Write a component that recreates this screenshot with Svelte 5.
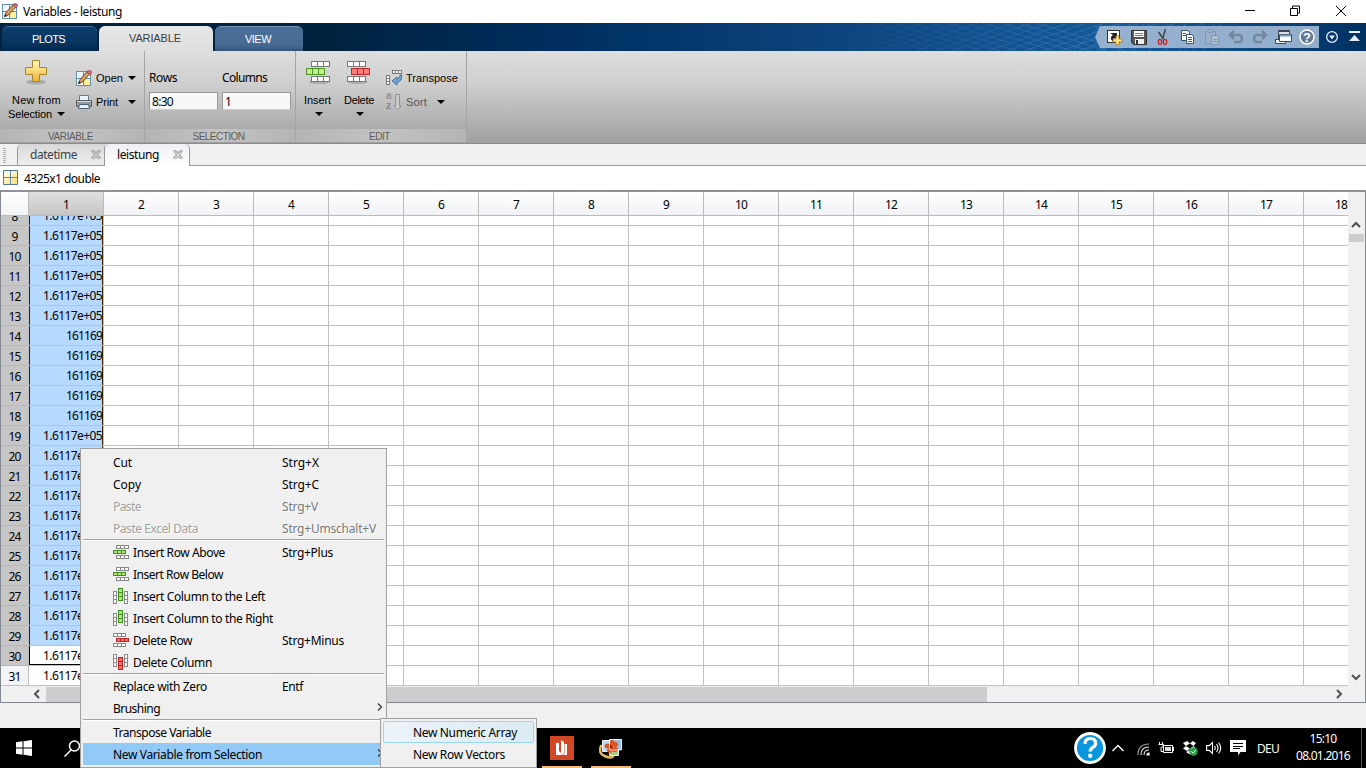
<script>
  const columns = Array.from({ length: 18 }, (_, i) => i + 1);
  const rows = Array.from({ length: 24 }, (_, i) => {
    const n = i + 8;
    return { n, value: n >= 14 && n <= 18 ? '161169' : '1.6117e+05', w: n >= 14 && n <= 18 ? 36 : 59 };
  });

  const menu = [
    { label: 'Cut', w: 19, key: 'Strg+X', kw: 37 },
    { label: 'Copy', w: 28, key: 'Strg+C', kw: 37 },
    { label: 'Paste', w: 28, key: 'Strg+V', kw: 36, off: true },
    { label: 'Paste Excel Data', w: 85, key: 'Strg+Umschalt+V', kw: 94, off: true },
    { sep: true },
    { label: 'Insert Row Above', w: 92, key: 'Strg+Plus', kw: 51, icon: 'row', color: 'green' },
    { label: 'Insert Row Below', w: 90, icon: 'row', color: 'green' },
    { label: 'Insert Column to the Left', w: 132, icon: 'col', color: 'green' },
    { label: 'Insert Column to the Right', w: 140, icon: 'col', color: 'green' },
    { label: 'Delete Row', w: 59, key: 'Strg+Minus', kw: 62, icon: 'row', color: 'red' },
    { label: 'Delete Column', w: 79, icon: 'col', color: 'red' },
    { sep: true },
    { label: 'Replace with Zero', w: 94, key: 'Entf', kw: 21 },
    { label: 'Brushing', w: 47, sub: true },
    { sep: true },
    { label: 'Transpose Variable', w: 98 },
    { label: 'New Variable from Selection', w: 149, sub: true, active: true }
  ];

  // Tracks the text so that the label takes up the given width.
  function fit(node, width) {
    const natural = node.getBoundingClientRect().width;
    node.style.letterSpacing = (width - natural) / node.textContent.length + 'px';
  }
</script>

{#snippet cells(x, y, w, h, n, vertical, stroke, fill)}
  {#each Array(n) as _, i}
    <rect x={x + (vertical ? 0 : i * (w - 1))} y={y + (vertical ? i * (h - 1) : 0)} width={w - 1} height={h - 1} {stroke} {fill} />
  {/each}
{/snippet}

{#snippet caret()}
  <svg class="caret" width="8" height="4"><path d="M0 0h8L4 4z" fill="#000" /></svg>
{/snippet}

{#snippet cross(inner)}
  <svg width="10" height="9"><path d="M1 0l8 9M9 0L1 9" stroke="#a2a2a2" stroke-width="3" /><path d="M1.500 1l7 7.500M8.500 1L1.500 8.500" stroke={inner} stroke-width=".9" /></svg>
{/snippet}

{#snippet pencil()}
  <svg width="16" height="16" viewBox="0 0 16 16">
    <rect x=".5" y="1.500" width="14" height="14" fill="#fff" stroke="#6291b0" />
    <path d="M8 9h6v6H8z" fill="#fff09a" /><path d="M1 2h6v6H1z" fill="#eef6fc" />
    <path d="M7.500 2v13M1 8.500h13" stroke="#6291b0" />
    <path d="M2.500 13.500l1.500-4L11.500 1l3 2.500-8 8.500z" fill="#d49a5c" stroke="#50311d" stroke-width=".8" />
    <path d="M11 2l2-2 3 2-2 3z" fill="#d9697a" stroke="#8d3545" stroke-width=".6" />
    <path d="M2 14l1-3 2 2z" fill="#222" />
  </svg>
{/snippet}

<div class="window">
  <div class="titlebar">
    {@render pencil()}
    <span class="ui" use:fit={99}>Variables - leistung</span>
    <svg class="winbtns" width="106" height="20" fill="none" stroke="#000">
      <path d="M0 9.500h10M45.500 7.500h7v7h-7zM47.500 7v-2h7v7h-2M91 5l10 10M101 5L91 15" />
    </svg>
  </div>

  <div class="tabs">
    <div class="tab plots"><span use:fit={33}>PLOTS</span></div>
    <div class="tab current"><span use:fit={52}>VARIABLE</span></div>
    <div class="tab view"><span use:fit={26}>VIEW</span></div>
    <svg class="mesh" width="406" height="28" fill="none" stroke="#8fb4dc" stroke-width=".8">
      <defs>
        <linearGradient id="fade"><stop offset="0" stop-color="#fff" stop-opacity="0" /><stop offset=".6" stop-color="#fff" /></linearGradient>
        <mask id="m"><rect width="406" height="28" fill="url(#fade)" /></mask>
      </defs>
      <g mask="url(#m)" opacity=".28">
        {#each Array(17) as _, i}
          <path d="M{i * 18 - 80} 0l90 28M{i * 18 - 20} 28l80 -28" />
        {/each}
        {#each Array(9) as _, i}
          <path d="M{245 + i * 15} 28l{30 - i} -28M{265 + i * 18} 0l22 28" />
        {/each}
      </g>
    </svg>
    <div class="quick">
      <svg width="224" height="22" viewBox="0 0 224 22">
        <path d="M0 11L5 0H224V22H5z" fill="#a3bad5" fill-opacity=".9" />
        <rect x="12.500" y="4.500" width="12" height="12" fill="#fff" stroke="#333" />
        <path d="M15 7h7v7l-2-2c-2 1-2 1-1 4-4-2-4-5-1-7z" fill="#222" />
        <path d="M21 10h3v3h3v3h-3v3h-3v-3h-3v-3h3z" fill="#ffe680" stroke="#a97c1d" stroke-width=".8" />
        <path d="M36.500 4.500h15v14h-13l-2-2z" fill="#555" stroke="#333" />
        <rect x="39" y="5" width="10" height="6" fill="#fff" /><path d="M40 7.500h8M40 9.500h8" stroke="#777" />
        <rect x="40" y="13" width="9" height="5" fill="#eee" /><rect x="41" y="14" width="2" height="4" fill="#333" />
        <path d="M70.500 3l-3 10M63.500 6l5 7" stroke="#444" stroke-width="1.500" />
        <g fill="none" stroke="#d01d22" stroke-width="1.300"><ellipse cx="65" cy="15.800" rx="1.700" ry="2.500" /><ellipse cx="70" cy="15.800" rx="1.700" ry="2.500" /></g>
        <g stroke="#33536f" fill="#fff"><path d="M86.500 4.500h6l2 2v8h-8z" /><path d="M91.500 8.500h5l2 2v7h-7z" /><path d="M88 7.500h3M88 9.500h3M93 11.500h4M93 13.500h4M93 15.500h4" /></g>
        <g opacity=".45" stroke="#68798f" fill="#a6b4c5"><path d="M110.500 5.500h10v12h-10z" /><path d="M113 3.500h5v3h-5z" /><path d="M116.500 9.500h5l2 2v7h-7z" fill="#cbd5e2" /><path d="M118 13.500h4M118 15.500h4" /></g>
        <g fill="none" stroke="#73879f" stroke-width="2.500"><path d="M139 5l-4 4 4 4M136 9h8q3 0 3 3.500t-3 3.500h-5" /><path d="M167 5l4 4-4 4M170 9h-8q-3 0-3 3.500t3 3.500h5" /></g>
        <g stroke="#3f4952"><path d="M183.500 4.500h11v9h-11z" fill="#ddd" /><path d="M183 5h12" stroke-width="2" /><path d="M180.500 13.500h10v4h-10z" fill="#eee" /><path d="M184.500 8.500h12v7h-12z" fill="#fff" /><path d="M185 9.500h11" stroke="#6a9cca" stroke-width="2" /></g>
        <circle cx="212" cy="11" r="7" fill="#607b98" stroke="#fff" stroke-width="1.500" />
        <text x="212" y="15.500" text-anchor="middle" font-size="13" font-weight="bold" fill="#fff">?</text>
      </svg>
      <svg width="47" height="22" viewBox="0 0 47 22" fill="#e7eef7">
        <circle cx="13" cy="11" r="5.300" fill="none" stroke="#e7eef7" stroke-width="1.300" /><path d="M10 9.500h6L13 13.500z" />
        <path d="M30 5h11v2H30zM30 15h11L35.500 9z" />
      </svg>
    </div>
  </div>

  <div class="ribbon">
    <section class="s1">
      <div class="tools">
        <div class="big new">
          <svg width="24" height="26"><defs><linearGradient id="gold" x2="0" y2="1"><stop offset="0" stop-color="#fff8bc" /><stop offset="1" stop-color="#eeb52c" /></linearGradient></defs><ellipse cx="12" cy="22" rx="10" ry="2.500" fill="#888" opacity=".5" /><path d="M8.500 .5h7v7h7v7h-7v7h-7v-7h-7v-7h7z" fill="url(#gold)" stroke="#a7842d" /></svg>
          <span class="l1" use:fit={49}>New from</span>
          <span class="l2"><span use:fit={44}>Selection</span>{@render caret()}</span>
        </div>
        <div class="stack">
          <div class="tool">{@render pencil()}<span use:fit={27}>Open</span>{@render caret()}</div>
          <div class="tool"><svg width="16" height="16"><path d="M3.500 1.500h9v6h-9z" fill="#e8f3fb" stroke="#65798a" /><path d="M.5 6.500h15v6H.5z" fill="#93999f" stroke="#5b6065" /><path d="M1 7.500h14" stroke="#d5d8da" /><path d="M3.500 10.500h9l1 4h-11z" fill="#e3f1fa" stroke="#4e6577" /></svg><span use:fit={22}>Print</span>{@render caret()}</div>
        </div>
      </div>
      <footer><span use:fit={45}>VARIABLE</span></footer>
    </section>
    <section class="s2">
      <div class="tools fields">
        <div class="field"><span class="ui" use:fit={28}>Rows</span><div class="input ui"><span use:fit={21}>8:30</span></div></div>
        <div class="field"><span class="ui" use:fit={45}>Columns</span><div class="input ui"><span use:fit={6}>1</span></div></div>
      </div>
      <footer><span use:fit={52}>SELECTION</span></footer>
    </section>
    <section class="s3">
      <div class="tools">
        <div class="big ins">
          <svg width="26" height="24"><ellipse cx="14" cy="21" rx="10" ry="2" fill="#777" opacity=".4" />{@render cells(6.5, 0.5, 7, 6, 3, false, '#777', '#fff')}{@render cells(1.5, 7.5, 7, 7, 3, false, '#4b9525', '#c3ee8a')}{@render cells(6.5, 15.5, 7, 6, 3, false, '#777', '#fff')}</svg>
          <span class="l1" use:fit={27}>Insert</span><span class="l2">{@render caret()}</span>
        </div>
        <div class="big del">
          <svg width="26" height="24"><ellipse cx="12" cy="21" rx="10" ry="2" fill="#777" opacity=".4" />{@render cells(1.5, 0.5, 7, 6, 3, false, '#777', '#fff')}{@render cells(5.5, 7.5, 7, 7, 3, false, '#bb282b', '#fa7d78')}{@render cells(1.5, 15.5, 7, 6, 3, false, '#777', '#fff')}</svg>
          <span class="l1" use:fit={30}>Delete</span><span class="l2">{@render caret()}</span>
        </div>
        <div class="stack edit">
          <div class="tool"><svg width="16" height="16">{@render cells(6.5, 0.5, 4, 4, 3, false, '#777', '#fff')}{@render cells(0.5, 5.5, 4, 4, 3, true, '#777', '#fff')}<path d="M14 5h2q0 7-5 7v3l-5-4 5-4v2q3 0 3-4z" fill="#6ca8d5" stroke="#2c638f" stroke-width=".8" /></svg><span use:fit={52}>Transpose</span></div>
          <div class="tool sort"><svg width="16" height="18"><text x="0" y="6" font-size="10" font-weight="bold" fill="#929292">a</text><text x="0" y="16" font-size="10" font-weight="bold" fill="#858585">z</text><path d="M9.500 1.500h4v11h2L11.500 16.500l-4-4h2z" fill="#c9c9c9" stroke="#939393" /></svg><span use:fit={21}>Sort</span>{@render caret()}</div>
        </div>
      </div>
      <footer><span use:fit={21}>EDIT</span></footer>
    </section>
  </div>

  <div class="docs">
    <svg class="grip" width="4" height="16" fill="#b0b0b0">{#each Array(8) as _, i}<path d="M0 {i * 2}h3v1H0z" />{/each}</svg>
    <div class="doc ui"><span use:fit={47}>datetime</span>{@render cross('#e8e8e8')}</div>
    <div class="doc open ui"><span use:fit={42}>leistung</span>{@render cross('#fff')}</div>
  </div>

  <div class="info ui">
    <svg width="16" height="16"><defs><linearGradient id="y" x2="1" y2="1"><stop offset="0" stop-color="#fff" /><stop offset="1" stop-color="#fbe068" /></linearGradient></defs><path d="M.5 .5h14v14H.5z" fill="url(#y)" stroke="#557890" /><path d="M7.500 1v13M1 7.500h13" stroke="#6589a0" /></svg>
    <span use:fit={76}>4325x1 double</span>
  </div>

  <div class="grid ui">
    <div class="head">
      <div class="corner"></div>
      {#each columns as c}<div class="hcell" class:sel={c === 1}><span use:fit={c < 10 ? 6 : 12}>{c}</span></div>{/each}
    </div>
    <div class="middle">
      <div class="body">
        <div class="rows">
          {#each rows as r}
            <div class="row">
              <div class="rh" class:sel={r.n < 31}><span use:fit={r.n < 10 ? 6 : 12}>{r.n}</span></div>
              {#each columns as c}
                <div class="cell" class:sel={c === 1 && r.n < 30} class:focus={c === 1 && r.n === 30}>{#if c === 1}<span use:fit={r.w}>{r.value}</span>{/if}</div>
              {/each}
            </div>
          {/each}
        </div>
      </div>
      <div class="vscroll">
        <svg width="10" height="7"><path d="M1 6l4-4 4 4" fill="none" stroke="#505050" stroke-width="2" /></svg>
        <div class="vthumb"></div>
        <svg class="down" width="10" height="7"><path d="M1 1l4 4 4-4" fill="none" stroke="#505050" stroke-width="2" /></svg>
      </div>
    </div>
    <div class="hscroll">
      <svg width="7" height="10"><path d="M6 1L2 5l4 4" fill="none" stroke="#505050" stroke-width="2" /></svg>
      <div class="hthumb"></div>
      <svg class="right" width="7" height="10"><path d="M1 1l4 4-4 4" fill="none" stroke="#505050" stroke-width="2" /></svg>
    </div>
  </div>
  <div class="status"></div>

  <div class="taskbar">
    <svg class="t-win" width="16" height="16" fill="#fff"><path d="M0 2.200L6.500 1.300V7.500H0zM7.500 1.200L16 0V7.500H7.500zM0 8.500H6.500V14.700L0 13.800zM7.500 8.500H16V16L7.500 14.800z" /></svg>
    <svg class="t-find" width="17" height="17" fill="none" stroke="#fff" stroke-width="1.500"><circle cx="10.500" cy="6" r="5" /><path d="M7 10L.5 16.500" /></svg>
    <div class="app a1">
      <svg width="24" height="24"><path d="M0 0h24v24H0z" fill="#d24726" /><path d="M6 7h3v8l2 2V4l3 2v11l-2 2H6zM14.500 8H17v11h-4l1.500-2z" fill="#fff" /></svg>
    </div>
    <div class="app a2">
      <svg width="24" height="24"><path d="M2.500 9q-4 8 3 11t9 0" fill="none" stroke="#e7b65a" stroke-width="2.500" /><path d="M3.500 4.500h10v11h-10z" fill="#b8dcf2" stroke="#eee" /><path d="M10.500 3.500h12v10h-12z" fill="#8fc2e3" stroke="#fff" /><path d="M10.500 13.500h9v6h-9z" fill="#a7ce85" stroke="#eee" /><g fill="#e4531c"><ellipse cx="9" cy="10" rx="3.500" ry="2.500" /><ellipse cx="13" cy="7" rx="2.500" ry="3" /><ellipse cx="16.500" cy="8.500" rx="2.500" ry="2.500" /><ellipse cx="15.500" cy="13.500" rx="3.500" ry="2.500" /><ellipse cx="10.500" cy="14.500" rx="2.500" ry="2.500" /></g><path d="M11 9l3 1-1 3-2-1z" fill="#a12a12" /><path d="M10.500 4v10h12" stroke="#fff" fill="none" opacity=".7" /></svg>
    </div>
    <svg class="t-help" width="32" height="32"><circle cx="16" cy="16" r="14.500" fill="#0a96dc" stroke="#fff" stroke-width="2.800" /><path d="M11 12q0-5.500 5.300-5.500t5.300 4.700q0 2.600-2.700 4.200t-2.700 4" fill="none" stroke="#fff" stroke-width="3.200" /><circle cx="16.200" cy="23.800" r="2.200" fill="#fff" /></svg>
    <svg class="t-up" width="12" height="8"><path d="M.5 7L6 1.500 11.500 7" fill="none" stroke="#fff" stroke-width="1.400" /></svg>
    <svg class="t-wifi" width="13" height="13" fill="none" stroke="#999" stroke-width="1.200"><path d="M1 12Q1 1 12 1" /><path d="M4 12Q4 4 12 4M7 12Q7 7 12 7" stroke="#ddd" /><path d="M10 12q0-2 2-2v2z" fill="#fff" stroke="#fff" /></svg>
    <svg class="t-bat" width="16" height="12" fill="none" stroke="#fff"><path d="M5.500 3.500h9v7h-9zM15.500 5v4M1.500 0v2M4.500 0v2M.5 2.500h5q0 3-2.500 3v4h2" /><path d="M7 5h6v4H7z" fill="#ddd" stroke="none" /></svg>
    <svg class="t-drop" width="15" height="15" fill="#fff"><path d="M0 2l4-2 3 2.500L3 5zM13 2L9.500 0 7 2.500 10.500 5zM0 7.500L3 5l4 2.500L4 10zM13 7.500L10.500 5 7 7.500 10 10zM3 11l4-2 3 2-3 2.500z" /><circle cx="10.500" cy="10.500" r="4.200" fill="#25a747" /><path d="M8.500 10.500l1.500 1.500 3-3" fill="none" stroke="#fff" /></svg>
    <svg class="t-vol" width="17" height="14" fill="none" stroke="#fff" stroke-width="1.100"><path d="M.6 4.600h2.500L6.500 1.500v11L3.100 9.400H.6zM8.500 5q1.500 2 0 4M10.500 3q3 4 0 8M12.500 1.500q4.500 5.500 0 11" /></svg>
    <svg class="t-note" width="16" height="16"><path d="M0 0h16v12h-5.500L8 15.500V12H0z" fill="#fff" /><path d="M3 3.500h10M3 6.500h10M3 8.500h7" stroke="#000" /></svg>
    <span class="lang ui"><span use:fit={22}>DEU</span></span>
    <div class="clock ui"><span use:fit={27}>15:10</span><span use:fit={54}>08.01.2016</span></div>
    <div class="desk"></div>
  </div>

  <div class="menu ui">
    {#each menu as item}
      {#if item.sep}
        <hr />
      {:else}
        <div class="item" class:off={item.off} class:active={item.active}>
          {#if item.icon}
            {@const s = item.color === 'green' ? '#3f8c1f' : '#bb2327'}
            {@const f = item.color === 'green' ? '#b4e680' : '#f5716c'}
            {@const o = item.color === 'green'}
            <svg width="17" height="17">
              {#if item.icon === 'row'}
                {@render cells(o ? 3.5 : 0.5, 1.5, 5, 4, 3, false, '#888', '#fff')}
                {@render cells(o ? 0.5 : 3.5, 6.5, 5, 4, 3, false, s, f)}
                {@render cells(o ? 3.5 : 0.5, 11.5, 5, 4, 3, false, '#888', '#fff')}
              {:else}
                {@render cells(0.5, o ? 3.5 : 0.5, 4, 5, 3, true, '#888', '#fff')}
                {@render cells(5.5, o ? 0.5 : 3.5, 5, 5, 3, true, s, f)}
                {@render cells(11.5, o ? 3.5 : 0.5, 4, 5, 3, true, '#888', '#fff')}
              {/if}
            </svg>
          {/if}
          <span class="label"><span use:fit={item.w}>{item.label}</span></span>
          {#if item.key}<span class="key"><span use:fit={item.kw}>{item.key}</span></span>{/if}
          {#if item.sub}<svg class="arrow" width="6" height="8"><path d="M1 .5L4.500 4 1 7.500" fill="none" stroke="#333" stroke-width="1.200" /></svg>{/if}
        </div>
      {/if}
    {/each}
  </div>
  <div class="submenu ui">
    <div class="sitem hot"><span use:fit={104}>New Numeric Array</span></div>
    <div class="sitem"><span use:fit={92}>New Row Vectors</span></div>
  </div>
</div>

<style>
  :global(body) { overflow: hidden; }
  .window { position: relative; width: 1366px; height: 768px; display: flex; flex-direction: column; overflow: hidden; background: #fff; color: #000; font: 11px "Liberation Sans", Arial, sans-serif; white-space: nowrap; }
  .window * { box-sizing: border-box; }
  svg { display: block; flex: none; }
  .ui { font-family: "Noto Sans", "Open Sans", sans-serif; font-size: 12px; }

  .titlebar { height: 23px; display: flex; align-items: center; padding: 0 15px 1px 2px; gap: 5px; }
  .winbtns { margin-left: auto; }

  .tabs { height: 28px; display: flex; align-items: flex-end; gap: 2px; padding-left: 2px; background: linear-gradient(90deg, #00233f 0, #00233f 24%, #002d5d 40%, #003468 46%, #0c4078 58%, #11508f 72%, #145a9a 82%, #0b4681 92%, #003060 100%); }
  .tab { height: 25px; display: flex; align-items: center; justify-content: center; border-radius: 6px 6px 0 0; font-size: 11px; color: #fff; padding: 0 2px 1px 0; }
  .plots { width: 95px; background: linear-gradient(#0d3e6e, #08345f 70%, #002850); border-top: 1px solid #487098; }
  .current { width: 114px; background: linear-gradient(#e8e8e8, #dedede); color: #3c3c3c; }
  .view { width: 88px; background: linear-gradient(#4b6f98, #466a93 75%, #315578); border-top: 1px solid #7894b3; }
  .mesh { margin-left: auto; margin-right: -141px; }
  .quick { display: flex; width: 271px; align-self: center; flex: none; }

  .ribbon { height: 93px; display: flex; background: linear-gradient(#dedede, #cfcfcf 35%, #a0a0a0); border-bottom: 1px solid #8c8c8c; }
  section { display: flex; flex-direction: column; border-right: 1px solid #a5a5a5; height: 91px; }
  .s1 { width: 145px; }
  .s2 { width: 151px; }
  .s3 { width: 171px; }
  .tools { height: 78px; display: flex; }
  footer { height: 13px; background: linear-gradient(90deg, #b4b4b4, #c3c3c3 50%, #b4b4b4); display: flex; align-items: center; justify-content: center; font-size: 10px; color: #5e5e5e; padding: 1px 3px 0 0; }
  .big { display: flex; flex-direction: column; align-items: center; }
  .big > svg { height: 26px; }
  .l1 { height: 14px; line-height: 14px; }
  .l2 { height: 14px; display: flex; align-items: center; gap: 5px; }
  .new { width: 73px; padding-top: 9px; }
  .new > svg { margin-right: 2px; }
  .new .l1, .ins .l1, .del .l1 { margin-top: 7px; }
  .ins { width: 43px; padding-top: 9px; }
  .del { width: 40px; padding-top: 9px; }
  .ins > svg, .del > svg { margin-top: 1px; height: 25px; }
  .ins .l2, .del .l2 { padding-left: 2px; }
  .stack { padding: 15px 0 0 3px; }
  .tool { height: 24px; display: flex; align-items: center; gap: 4px; }
  .stack:not(.edit) .caret { margin-left: auto; }
  .stack:not(.edit) { width: 63px; }
  .edit { padding-left: 7px; }
  .edit .caret { margin-left: 6px; }
  .sort { color: #555; }
  .fields { padding: 15px 0 0 4px; gap: 4px; }
  .field { width: 69px; display: flex; flex-direction: column; }
  .field > span { height: 26px; line-height: 23px; align-self: flex-start; }
  .input { height: 18px; display: flex; align-items: center; background: #f8f8f8; border: 1px solid #9a9a9a; border-bottom-color: #ccc; padding-left: 2px; }

  .docs { height: 22px; display: flex; background: #f0f0f0; border-bottom: 1px solid #999; }
  .grip { margin: 4px 11px 0 3px; }
  .doc { width: 88px; height: 21px; display: flex; align-items: center; justify-content: space-between; padding: 0 4px 0 12px; color: #444; background: linear-gradient(#d8d8d8, #eee); border: 1px solid #999; border-width: 0 0 0 1px; border-radius: 5px 0 0; margin-left: -1px; }
  .open { width: 86px; height: 22px; color: #000; background: linear-gradient(#f0f0f5, #fff); border-width: 0 1px; border-radius: 5px 5px 0 0; margin-left: -1px; padding: 0 6px 1px 12px; }

  .info { height: 24px; display: flex; align-items: center; gap: 5px; padding: 0 0 0 3px; }

  .grid { height: 513px; display: flex; flex-direction: column; border: 1px solid #828790; border-top: 2px solid #909298; background: #f0f0f0; }
  .head { height: 24px; width: 1347px; display: flex; overflow: hidden; flex: none; }
  .corner { width: 28px; flex: none; border: 1px solid #bbb; border-width: 0 1px 1px 0; background: linear-gradient(#fff, #f2f3f6); }
  .hcell { width: 75px; flex: none; display: flex; align-items: center; justify-content: center; border: 1px solid #bbb; border-width: 0 1px 1px 0; background: linear-gradient(#fff, #f1f2f5); padding-top: 1px; }
  .hcell.sel { background: linear-gradient(#dfdfdf, #c6c6c6); }
  .middle { height: 470px; display: flex; flex: none; }
  .body { width: 1347px; overflow: hidden; background: #fff; }
  .rows { margin-top: -10px; }
  .row { display: flex; height: 20px; }
  .rh { width: 28px; flex: none; display: flex; align-items: center; justify-content: center; background: #f3f4f7; border: 1px solid #c0c0c0; border-width: 0 1px 1px 0; padding-top: 1px; }
  .rh.sel { background: #c6c6c6; border-bottom-color: #b8b8b8; }
  .cell { width: 75px; flex: none; display: flex; align-items: center; justify-content: flex-end; border: 1px solid #c0c0c0; border-width: 0 1px 1px 0; padding-right: 1px; }
  .cell.sel { background: #b5d9ff; box-shadow: inset 1px 0 #402000, inset -1px 0 #402000; }
  .cell.focus { box-shadow: inset 1px 0 #000, inset -1px 0 #000, inset 0 -1px #000; }
  .vscroll { width: 17px; display: flex; flex-direction: column; align-items: center; padding: 5px 1px 5px 0; }
  .vthumb { width: 15px; height: 8px; background: #cdcdcd; margin-top: 6px; }
  .down { margin-top: auto; }
  .hscroll { flex: 1; display: flex; align-items: center; padding: 0 22px 0 32px; }
  .hthumb { width: 941px; height: 15px; background: #cdcdcd; margin-left: 6px; }
  .right { margin-left: auto; }
  .status { height: 25px; background: #f0f0f0; }

  .taskbar { height: 40px; display: flex; align-items: center; background: #000; color: #fff; }
  .t-win { margin-left: 16px; }
  .t-find { margin-left: 32px; }
  .app { width: 40px; height: 40px; display: flex; align-items: center; justify-content: center; border-bottom: 2px solid #f9b976; padding-top: 2px; }
  .a1 { margin-left: 461px; }
  .a2 { margin-left: 9px; }
  .t-help { margin-left: 443px; }
  .t-up { margin-left: 6px; }
  .t-wifi { margin: 2px 0 0 13px; }
  .t-bat { margin-left: 8px; }
  .t-drop { margin-left: 9px; }
  .t-vol { margin-left: 8px; }
  .t-note { margin-left: 7px; }
  .lang { width: 22px; margin-left: 11px; }
  .clock { display: flex; flex-direction: column; align-items: center; width: 54px; margin-left: 17px; line-height: 17px; padding-bottom: 2px; }
  .desk { width: 1px; height: 40px; background: #555; margin-left: 11px; }

  .menu { position: absolute; left: 80px; top: 448px; width: 307px; height: 320px; padding: 2px; background: #f0f0f0; border: 1px solid #a0a0a0; }
  .menu hr { height: 2px; margin: 0; border: 0; border-top: 1px solid #a0a0a0; background: #fff; }
  .item { height: 22px; padding: 1px 0 0 30px; display: flex; align-items: center; position: relative; }
  .item > svg:first-child { margin: -1px 3px 0 0; }
  .off { color: #a0a0a0; text-shadow: 1px 1px #fff; }
  .off .key { color: #777; }
  .active { background: #91c9f7; }
  .key { position: absolute; left: 199px; }
  .arrow { position: absolute; right: 1px; top: 6px; }
  .submenu { position: absolute; left: 380px; top: 718px; width: 157px; height: 50px; padding: 2px; background: #f0f0f0; border: 1px solid #a0a0a0; }
  .sitem { height: 22px; padding: 0 0 0 29px; display: flex; align-items: center; border: 1px solid transparent; }
  .hot { border-color: #9ad7f0; background: linear-gradient(90deg, #ebf3f8, #dcebf2); border-radius: 2px; }
</style>
